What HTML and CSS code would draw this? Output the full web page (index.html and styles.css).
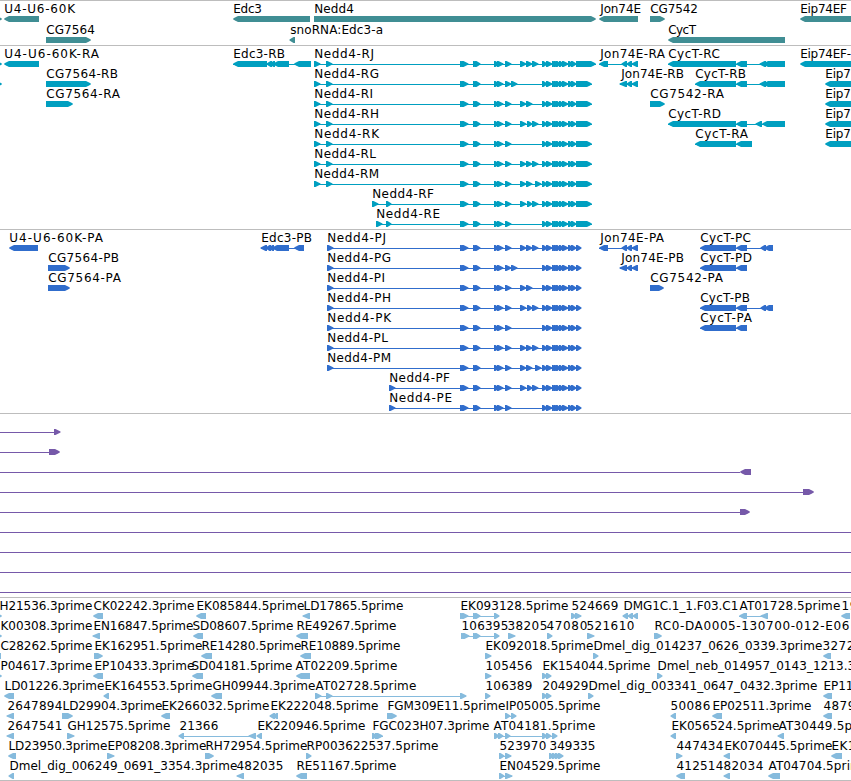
FILE: index.html
```html
<!DOCTYPE html>
<html lang="en">
<head>
<meta charset="utf-8">
<title>Genome browser</title>
<link rel="stylesheet" href="styles.css">
</head>
<body>
<main class="browser">
  <section class="track gene" data-track="gene"></section>
  <section class="track transcript" data-track="transcript"></section>
  <section class="track protein" data-track="protein"></section>
  <section class="track alignment" data-track="alignment"></section>
  <section class="track est" data-track="est"></section>
</main>
<script src="script.js"></script>
</body>
</html>
```
FILE: styles.css
```css
body {
  margin: 0;
  background: #fff;
  overflow: hidden;
}

.browser {
  display: flex;
  flex-direction: column;
  width: 100%;
  height: 781px;
}

.track {
  box-sizing: border-box;
  flex: none;
  height: 184px;
  border-top: 1px solid #bdbdbd;
  overflow: hidden;
}

.gene { height: 45px; color: #408e94; }
.transcript { color: #009fc0; }
.protein { color: #306dcc; }
.alignment { color: #7659a9; }
.est { color: #86bbdd; border-bottom: 1px solid #bdbdbd; }

.canvas {
  display: block;
  width: 100%;
  height: 100%;
}

.canvas text {
  font-family: "DejaVu Sans", sans-serif;
  font-size: 12px;
  fill: #000;
}

.canvas path { fill: currentColor; }
```
FILE: script.js
```js
// Feature: [row, label, labelStart, labelEnd, "exons"]
// Exon list: "L" or "R" for the strand, then start-end pairs.
// A connector line runs from the first exon to the last; "line:a-b" sets it explicitly.
const tail = "542-547 546-552 552-556 554-558 556-560 559-563 562-568 568-573 571-576";
const mid = "460-466 462-468 473-478 475-480 494-499 497-503 505-511";
const nedd = [
  ["J", 373, "520-526 526-532 532-538"],
  ["G", 378, "511-517"],
  ["I", 372, "520-526 526-532"],
  ["H", 378, "520-526 527-532 532-538"],
  ["K", 378, ""],
  ["L", 375, "520-526 526-532 532-538"],
  ["M", 378, "520-526 526-532 535-541"],
  ["F", 433, "520-526 527-532 532-538"],
  ["E", 439, ""]
];
const rnaStart = i => i === 7 ? 372 : i === 8 ? 376 : 314;
const neddRna = nedd.map(([n, end, extra], i) => {
  const s = rnaStart(i);
  const second = i > 6 ? "386-391" : "326-332";
  return [i, "Nedd4-R" + n, s, end, `R ${s}-${s + 6} ${second} ${mid} ${extra} ${tail} 576-${i ? 592 : 596}`];
});
const neddPep = nedd.map(([n, end, extra], i) => {
  const s = i > 6 ? 389 : 327;
  return [i, "Nedd4-P" + n, s, end + (i === 7 ? 16 : 12), `R ${s}-${s + 6} ${mid} ${extra} ${tail} 576-581`];
});

const tracks = {
  gene: [
    [0, "", 0, 0, "R -6-2"],
    [0, "U4-U6-60K", 4, 74, "L 4-39"],
    [0, "Edc3", 233, 261, "L 233-310"],
    [0, "Nedd4", 314, 353, "R 314-596"],
    [0, "Jon74E", 600, 640, "L 599-638"],
    [0, "CG7542", 650, 697, "R 650-665"],
    [0, "Eip74EF", 800, 846, "L 800-860"],
    [1, "CG7564", 46, 94, "R 46-91"],
    [1, "snoRNA:Edc3-a", 290, 382, "L 290-295"],
    [1, "CycT", 668, 695, "L 668-785"]
  ],
  transcript: [
    [0, "", 0, 0, "R -6-2"],
    [1, "", 0, 0, "R -6-2"],
    [0, "U4-U6-60K-RA", 4, 98, "L 4-39"],
    [0, "Edc3-RB", 233, 284, "L 233-267 267-272 270-275 273-289 294-311"],
    [1, "CG7564-RB", 46, 117, "R 46-91"],
    [2, "CG7564-RA", 46, 119, "R 46-73"],
    ...neddRna,
    [0, "Jon74E-RA", 600, 664, "L 599-608 622-627 627-632 632-638"],
    [1, "Jon74E-RB", 621, 683, "L 620-627 627-632 632-638"],
    [2, "CG7542-RA", 650, 723, "R 650-665"],
    [0, "CycT-RC", 668, 719, "L 668-736 736-747 760-766 763-785"],
    [1, "CycT-RB", 695, 745, "L 695-736 736-747 760-766 763-785"],
    [3, "CycT-RD", 668, 720, "L 668-736 736-747 756-762 762-785"],
    [4, "CycT-RA", 695, 747, "L 695-736 736-752"],
    [0, "Eip74EF-", 800, 850, "L 800-860"],
    [1, "Eip7", 825, 850, "L 825-860"],
    [2, "Eip7", 825, 850, "L 825-860"],
    [3, "Eip7", 825, 850, "L 825-860"],
    [4, "Eip7", 825, 850, "L 825-860"]
  ],
  protein: [
    [0, "U4-U6-60K-PA", 9, 102, "L 9-38"],
    [1, "CG7564-PB", 48, 118, "R 48-70"],
    [2, "CG7564-PA", 48, 120, "R 48-70"],
    [0, "Edc3-PB", 261, 311, "L 261-267 266-271 269-274 272-289 294-304"],
    ...neddPep,
    [0, "Jon74E-PA", 600, 663, "L 599-608 622-627 627-632 632-638"],
    [1, "Jon74E-PB", 621, 683, "L 620-627 627-632 632-638"],
    [2, "CG7542-PA", 650, 722, "R 650-664"],
    [0, "CycT-PC", 700, 750, "L 700-736 736-747 761-766 764-773"],
    [1, "CycT-PD", 700, 751, "L 700-736 736-747"],
    [3, "CycT-PB", 700, 749, "L 700-736 736-747 761-766 764-773"],
    [4, "CycT-PA", 700, 751, "L 700-736 736-747"]
  ],
  alignment: [
    [0, "", 0, 0, "R line:0-54 54-60"],
    [1, "", 0, 0, "R line:0-49 49-60"],
    [2, "", 0, 0, "L line:0-740 740-751"],
    [3, "", 0, 0, "R line:0-803 803-814"],
    [4, "", 0, 0, "R line:0-740 740-750"],
    [5, "", 0, 0, "R line:0-860"],
    [6, "", 0, 0, "R line:0-860"],
    [7, "", 0, 0, "R line:0-860"],
    [8, "", 0, 0, "R line:0-860"]
  ],
  est: [
    [0, "H21536.3prime", 0, 92, "R -6-2"],
    [0, "CK02242.3prime", 94, 194, "L 93-103"],
    [0, "EK085844.5prime", 197, 304, "L 196-206"],
    [0, "LD17865.5prime", 304, 403, "L 303-310"],
    [0, "EK093128.5prime", 461, 568, "R 460-466 462-468 473-478 475-480 494-499"],
    [0, "524669", 572, 618, "R 571-576 575-581"],
    [0, "DMG1C.1_1.F03.C1", 624, 738, "L 623-628 628-633 633-638"],
    [0, "AT01728.5prime", 740, 840, "L 739-747 761-768"],
    [0, "19", 842, 857, "L 841-850"],
    [1, "K00308.3prime", 1, 92, "R -6-2"],
    [1, "EN16847.5prime", 94, 193, "L 93-100"],
    [1, "SD08607.5prime", 193, 293, "L 193-203"],
    [1, "RE49267.5prime", 297, 396, "L 296-308"],
    [1, "106395", 462, 508, "R 461-467 463-469 473-478 475-480 494-499"],
    [1, "38205", 508, 547, "R 508-515"],
    [1, "47080", 547, 587, "R 547-552"],
    [1, "521610", 587, 634, "R 587-594"],
    [1, "RC0-DA0005-130700-012-E06", 655, 849, "R 654-662"],
    [2, "C28262.5prime", 1, 92, "L -6-1"],
    [2, "EK162951.5prime", 95, 202, "R 94-103"],
    [2, "RE14280.5prime", 202, 301, "L 201-212"],
    [2, "RE10889.5prime", 301, 400, "L 300-311"],
    [2, "EK092018.5prime", 486, 593, "R 485-491"],
    [2, "Dmel_dig_014237_0626_0339.3prime", 594, 822, "R 593-598"],
    [2, "3272", 823, 854, "L 823-831"],
    [3, "P04617.3prime", 1, 92, "R -6-2"],
    [3, "EP10433.3prime", 95, 194, "L 93-103"],
    [3, "SD04181.5prime", 192, 292, "L 192-203"],
    [3, "AT02209.5prime", 296, 397, "L 296-310"],
    [3, "105456", 486, 532, "R 485-491"],
    [3, "EK154044.5prime", 543, 650, "R 542-547 546-551"],
    [3, "Dmel_neb_014957_0143_1213.3prime", 658, 890, "R 657-662"],
    [4, "LD01226.3prime", 5, 104, "L 4-14"],
    [4, "EK164553.5prime", 105, 212, "L 104-109"],
    [4, "GH09944.3prime", 213, 315, "L 211-222"],
    [4, "AT02728.5prime", 316, 416, "R 315-321 326-332 460-466"],
    [4, "106389", 486, 532, "R 485-490"],
    [4, "204929", 543, 588, "R 542-547 546-551"],
    [4, "Dmel_dig_003341_0647_0432.3prime", 589, 817, "R 588-593"],
    [4, "EP11", 824, 853, "L 823-832"],
    [5, "2647894", 8, 62, "L 7-14"],
    [5, "LD29904.3prime", 63, 162, "R 62-73"],
    [5, "EK266032.5prime", 162, 269, "L 161-170"],
    [5, "EK222048.5prime", 271, 378, "L 270-275 273-278"],
    [5, "FGM309E11.5prime", 388, 505, "R 387-397"],
    [5, "IP05005.5prime", 506, 600, "R 505-510 511-516"],
    [5, "50086", 671, 710, "L 671-676"],
    [5, "EP02511.3prime", 713, 811, "L 712-722"],
    [5, "4879", 824, 855, "L 823-832"],
    [6, "2647541", 8, 62, "L 7-14"],
    [6, "GH12575.5prime", 68, 170, "R 67-74"],
    [6, "21366", 180, 218, "L 179-184 249-256"],
    [6, "EK220946.5prime", 258, 365, "L 257-262"],
    [6, "FGC023H07.3prime", 373, 489, "R 372-377 375-383"],
    [6, "AT04181.5prime", 494, 595, "R 494-499 498-503 505-510 542-547 546-551 552-557"],
    [6, "EK056524.5prime", 672, 779, "L 671-676"],
    [6, "AT30449.5prime", 779, 880, "L 778-784"],
    [7, "LD23950.3prime", 9, 107, "L 8-16"],
    [7, "EP08208.3prime", 108, 206, "R 107-114"],
    [7, "RH72954.5prime", 206, 307, "R 205-214"],
    [7, "RP003622537.5prime", 307, 438, "R 306-311"],
    [7, "523970", 500, 546, "R 499-504 505-511"],
    [7, "349335", 550, 595, "R 549-554 552-557 555-560 558-563"],
    [7, "447434", 677, 723, "R 676-682"],
    [7, "EK070445.5prime", 725, 832, "L 724-730"],
    [7, "EK1", 832, 855, "L 831-842"],
    [8, "Dmel_dig_006249_0691_3354.3prime", 10, 237, "L 9-14"],
    [8, "482035", 237, 283, "L 237-244"],
    [8, "RE51167.5prime", 297, 396, "L 296-307"],
    [8, "EN04529.5prime", 500, 600, "R 499-504 505-512"],
    [8, "412514", 677, 723, "L 676-685"],
    [8, "82034", 724, 763, "L 724-730"],
    [8, "AT04704.5prime", 769, 869, "L 768-780"]
  ]
};

function exonPath(a, b, y, strand) {
  const sign = strand === "R" ? -1 : 1;
  const tip = strand === "R" ? b : a;
  const base = strand === "R" ? a : b;
  if (b - a <= 7) {
    const shoulder = base - sign * 1.5;
    const nose = tip - sign * 0.5;
    return `M${nose} ${y + 2.5}L${shoulder} ${y}H${base}V${y + 6}H${shoulder}L${nose} ${y + 3.5}Z`;
  }
  const n = tip + sign * 2;
  const s = tip + sign * 5;
  return `M${tip} ${y + 2.7}L${n} ${y + 1.5}L${s} ${y}H${base}V${y + 6}H${s}L${n} ${y + 4.5}L${tip} ${y + 3.3}Z`;
}

document.querySelectorAll(".track").forEach(section => {
  const name = section.dataset.track;
  const pitch = name === "gene" ? 21 : 20;
  const shift = name === "est" ? -0.5 : 0.2;
  let shapes = "";
  let labels = "";
  for (const [row, label, from, to, spec] of tracks[name]) {
    const y = 15 + row * pitch;
    const strand = spec[0];
    const exons = [...spec.matchAll(/ (-?\d+)-(\d+)/g)].map(m => [+m[1], +m[2]]);
    const line = spec.match(/line:(\d+)-(\d+)/);
    const ends = line ? [+line[1], +line[2]] : [exons[0][0], exons[exons.length - 1][1]];
    if (line || exons.length > 1) shapes += `<path d="M${ends[0]} ${y + 3}H${ends[1]}v1H${ends[0]}Z"/>`;
    for (const [a, b] of exons) shapes += `<path d="${exonPath(a, b, y, strand)}"/>`;
    if (label) {
      labels += `<text x="${from + shift}" y="${y - 3}" textLength="${to - from + 0.8}">${label}</text>`;
    }
  }
  section.innerHTML = `<svg class="canvas">${shapes}${labels}</svg>`;
});
```
